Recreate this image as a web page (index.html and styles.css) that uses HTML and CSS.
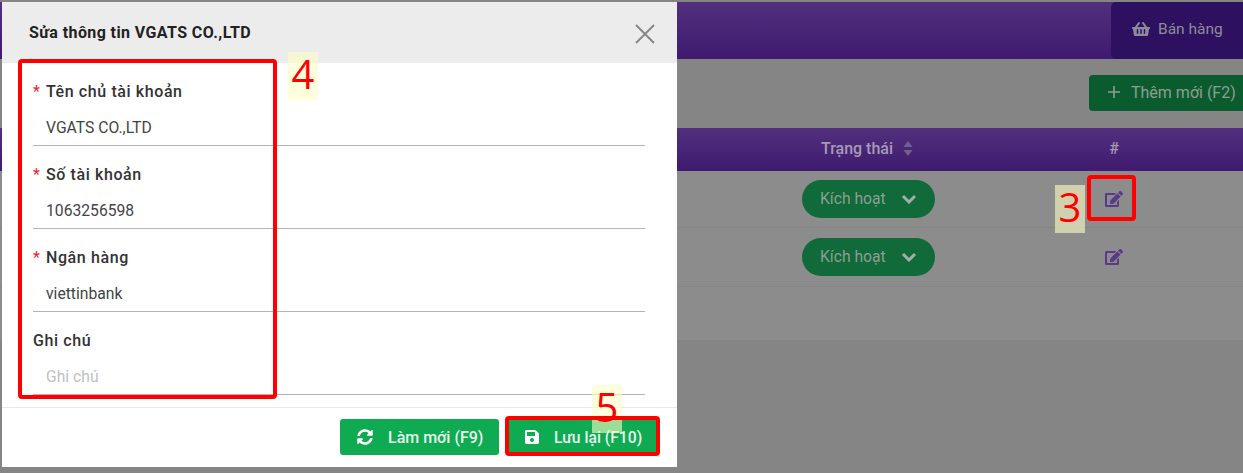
FILE: index.html
```html
<!DOCTYPE html>
<html lang="en">
<head>
    <meta charset="UTF-8">
    <title>Sửa thông tin</title>
    <link rel="stylesheet" href="styles.css">
</head>
<body>
    <!-- Icons -->
    <svg class="icon-defs" xmlns="http://www.w3.org/2000/svg">
        <symbol id="i-edit" viewBox="0 0 576 512"><path d="M402.6 83.2l90.2 90.2c3.8 3.8 3.8 10 0 13.8L274.4 405.6l-92.8 10.3c-12.4 1.4-22.9-9.1-21.5-21.5l10.3-92.8L388.8 83.2c3.8-3.8 10-3.8 13.8 0zm162-22.9l-48.8-48.8c-15.2-15.2-39.9-15.2-55.2 0l-35.4 35.4c-3.8 3.8-3.8 10 0 13.8l90.2 90.2c3.8 3.8 10 3.8 13.8 0l35.4-35.4c15.2-15.3 15.2-40 0-55.2zM384 346.2V448H64V128h229.8c3.2 0 6.2-1.3 8.5-3.5l40-40c7.6-7.6 2.2-20.5-8.5-20.5H48C21.5 64 0 85.5 0 112v352c0 26.5 21.5 48 48 48h352c26.5 0 48-21.5 48-48V306.2c0-10.7-12.9-16-20.5-8.5l-40 40c-2.2 2.3-3.5 5.3-3.5 8.5z"/></symbol>
        <symbol id="i-save" viewBox="0 0 448 512"><path d="M433.941 129.941l-83.882-83.882A48 48 0 0 0 316.118 32H48C21.49 32 0 53.49 0 80v352c0 26.51 21.49 48 48 48h352c26.51 0 48-21.49 48-48V163.882a48 48 0 0 0-14.059-33.941zM224 416c-35.346 0-64-28.654-64-64 0-35.346 28.654-64 64-64s64 28.654 64 64c0 35.346-28.654 64-64 64zm96-304.52V212c0 6.627-5.373 12-12 12H76c-6.627 0-12-5.373-12-12V108c0-6.627 5.373-12 12-12h228.52c3.183 0 6.235 1.264 8.485 3.515l3.48 3.48A11.996 11.996 0 0 1 320 111.48z"/></symbol>
        <symbol id="i-sync" viewBox="0 0 512 512"><path d="M370.72 133.28C339.458 104.008 298.888 87.962 255.848 88c-77.458.068-144.328 53.178-162.791 126.85-1.344 5.363-6.122 9.15-11.651 9.15H24.103c-7.498 0-13.194-6.807-11.807-14.176C33.933 94.924 134.813 8 256 8c66.448 0 126.791 26.136 171.315 68.685L463.03 40.97C478.149 25.851 504 36.559 504 57.941V192c0 13.255-10.745 24-24 24H345.941c-21.382 0-32.09-25.851-16.971-40.971l41.75-41.749zM32 296h134.059c21.382 0 32.09 25.851 16.971 40.971l-41.75 41.75c31.262 29.273 71.835 45.319 114.876 45.28 77.418-.07 144.315-53.144 162.787-126.849 1.344-5.363 6.122-9.15 11.651-9.15h57.304c7.498 0 13.194 6.807 11.807 14.176C478.067 417.076 377.187 504 256 504c-66.448 0-126.791-26.136-171.315-68.685L48.97 471.03C33.851 486.149 8 475.441 8 454.059V320c0-13.255 10.745-24 24-24z"/></symbol>
        <symbol id="i-basket" viewBox="0 0 576 512"><path d="M576 216v16c0 13.255-10.745 24-24 24h-8l-26.113 182.788C514.509 462.435 494.257 480 470.37 480H105.63c-23.887 0-44.139-17.565-47.518-41.212L32 256h-8c-13.255 0-24-10.745-24-24v-16c0-13.255 10.745-24 24-24h67.341l106.78-146.821c10.395-14.292 30.407-17.453 44.701-7.058 14.293 10.395 17.453 30.408 7.058 44.701L170.477 192h235.046L326.12 82.821c-10.395-14.292-7.234-34.306 7.059-44.701 14.291-10.395 34.306-7.235 44.701 7.058L484.659 192H552c13.255 0 24 10.745 24 24zM312 392V280c0-13.255-10.745-24-24-24s-24 10.745-24 24v112c0 13.255 10.745 24 24 24s24-10.745 24-24zm112 0V280c0-13.255-10.745-24-24-24s-24 10.745-24 24v112c0 13.255 10.745 24 24 24s24-10.745 24-24zm-224 0V280c0-13.255-10.745-24-24-24s-24 10.745-24 24v112c0 13.255 10.745 24 24 24s24-10.745 24-24z"/></symbol>
        <symbol id="i-chevron" viewBox="0 0 16 10"><path d="M2 2l6 6 6-6" fill="none" stroke="currentColor" stroke-width="3"/></symbol>
    </svg>

    <!-- Page behind the dialog -->
    <div class="page">
        <header class="topbar">
            <a class="sale-tab">
                <svg class="sale-icon"><use href="#i-basket"/></svg>
                Bán hàng
            </a>
        </header>

        <div class="toolbar">
            <button class="add-btn">
                <svg class="plus-icon" viewBox="0 0 12 12"><path d="M6 0v12M0 6h12" stroke="currentColor" stroke-width="1.6"/></svg>
                Thêm mới (F2)
            </button>
        </div>

        <div class="table">
            <div class="table-row table-head">
                <div></div>
                <div class="cell status-head">
                    Trạng thái
                    <svg class="sort-icon" viewBox="0 0 10 15"><path d="M5 0l4.5 6H.5zM5 15L.5 9h9z"/></svg>
                </div>
                <div class="cell">#</div>
            </div>
            <div class="table-row row-first">
                <div></div>
                <div class="cell"><span class="status">Kích hoạt <svg class="chevron"><use href="#i-chevron"/></svg></span></div>
                <div class="cell"><svg class="edit-icon"><use href="#i-edit"/></svg></div>
            </div>
            <div class="table-row row-second">
                <div></div>
                <div class="cell"><span class="status">Kích hoạt <svg class="chevron"><use href="#i-chevron"/></svg></span></div>
                <div class="cell"><svg class="edit-icon"><use href="#i-edit"/></svg></div>
            </div>
            <div class="table-foot"></div>
        </div>
    </div>

    <!-- Dialog -->
    <div class="modal">
        <div class="modal-header">
            <h1 class="modal-title">Sửa thông tin VGATS CO.,LTD</h1>
            <svg class="close-icon" viewBox="0 0 20 20"><path d="M1 1l18 18M19 1L1 19" fill="none" stroke="currentColor" stroke-width="1.8"/></svg>
        </div>
        <div class="modal-body">
            <div class="field">
                <label class="field-label"><span class="required">*</span>Tên chủ tài khoản</label>
                <div class="field-input">VGATS CO.,LTD</div>
            </div>
            <div class="field">
                <label class="field-label"><span class="required">*</span>Số tài khoản</label>
                <div class="field-input">1063256598</div>
            </div>
            <div class="field">
                <label class="field-label"><span class="required">*</span>Ngân hàng</label>
                <div class="field-input">viettinbank</div>
            </div>
            <div class="field">
                <label class="field-label">Ghi chú</label>
                <div class="field-input placeholder">Ghi chú</div>
            </div>
        </div>
        <div class="modal-footer">
            <button class="btn btn-reset"><svg class="btn-icon"><use href="#i-sync"/></svg>Làm mới (F9)</button>
            <button class="btn btn-save"><svg class="btn-icon"><use href="#i-save"/></svg>Lưu lại (F10)</button>
        </div>
    </div>

    <!-- Screenshot annotations -->
    <div class="step-label step-3">3</div>
    <div class="step-label step-4">4</div>
    <div class="step-label step-5">5</div>
    <div class="mark mark-3"></div>
    <div class="mark mark-4"></div>
    <div class="mark mark-5"></div>
</body>
</html>
```

FILE: styles.css
```css
/* Basic Styling */
* {
    box-sizing: border-box;
}

html,
body {
    height: 100%;
}

body {
    margin: 0;
    background: #858585;
    font-family: Roboto, "Liberation Sans", sans-serif;
    overflow: hidden;
    position: relative;
}

.icon-defs {
    display: none;
}

/* Page behind the dialog */
.page {
    padding-top: 2px;
    color: #8f8f8f;
}

.topbar {
    height: 57px;
    display: flex;
    justify-content: flex-end;
    background: linear-gradient(to bottom, #52307c, #3f1a70);
}

.sale-tab {
    width: 132px;
    display: flex;
    align-items: center;
    padding: 0 0 4px 21px;
    gap: 8px;
    background: #2d1160;
    border-radius: 5px 0 0 5px;
    font-size: 15.5px;
    color: #8f8a99;
}

.sale-icon {
    width: 18px;
    height: 16px;
    fill: currentColor;
}

.toolbar {
    height: 69px;
    padding-top: 16px;
    display: flex;
    justify-content: flex-end;
}

.add-btn {
    height: 36px;
    width: 154px;
    display: flex;
    align-items: center;
    padding: 0 0 2px 19px;
    gap: 11px;
    border: none;
    border-radius: 4px 0 0 4px;
    background: #0a5c2f;
    color: #8f9d93;
    font-family: inherit;
    font-size: 16px;
}

.plus-icon {
    width: 12px;
    height: 12px;
}

.table-row {
    display: grid;
    grid-template-columns: 738px 261px 230px;
    padding-right: 14px;
}

.cell {
    display: flex;
    justify-content: center;
    align-items: center;
}

.table-head {
    height: 43px;
    padding-bottom: 2px;
    background: linear-gradient(to bottom, #52307c, #3f1a70);
    color: #a49bb3;
    font-size: 16px;
    font-weight: 500;
}

.status-head {
    padding-right: 3px;
}

.sort-icon {
    width: 10px;
    height: 15px;
    margin-left: 10px;
    fill: #72608c;
}

.row-first {
    height: 57px;
    background: #8c8c8c;
    border-bottom: 1px solid #858585;
}

.row-second {
    height: 59px;
    background: #8c8c8c;
    border-bottom: 1px solid #858585;
}

.table-foot {
    height: 53px;
    background: #8c8c8c;
}

.status {
    width: 133px;
    height: 38px;
    display: flex;
    align-items: center;
    justify-content: space-between;
    padding: 0 18px 1px;
    border-radius: 19px;
    background: #106a39;
    color: #8f9d93;
    font-size: 15.7px;
}

.chevron {
    width: 16px;
    height: 10px;
    color: #a2aea6;
}

.edit-icon {
    width: 18px;
    height: 16px;
    fill: #5a3a88;
}

/* Dialog */
.modal {
    position: absolute;
    top: 2px;
    left: 2px;
    width: 675px;
    height: 465px;
    display: flex;
    flex-direction: column;
    background: #fff;
}

.modal-header {
    flex: none;
    height: 61px;
    display: flex;
    align-items: center;
    justify-content: space-between;
    padding: 0 22px 0 27px;
    background: #ececec;
}

.modal-title {
    margin: 0;
    font-size: 16px;
    font-weight: 700;
    letter-spacing: 0.4px;
    color: #222;
}

.close-icon {
    width: 20px;
    height: 20px;
    margin-top: 2px;
    color: #848484;
}

.modal-body {
    flex: 1;
    min-height: 0;
    padding: 18px 32px 0 31px;
}

.field {
    height: 83px;
}

.field-label {
    display: block;
    height: 22px;
    margin-bottom: 7px;
    line-height: 22px;
    font-size: 16px;
    font-weight: 500;
    letter-spacing: 0.6px;
    color: #333;
}

.required {
    display: inline-block;
    width: 13px;
    color: #f5222d;
    font-weight: 400;
}

.field-input {
    height: 36px;
    padding: 0 0 1px 13px;
    display: flex;
    align-items: center;
    border-bottom: 1px solid #b3b3b3;
    font-size: 15.7px;
    color: #444;
}

.placeholder {
    color: #bfbfbf;
}

.modal-footer {
    flex: none;
    height: 60px;
    display: flex;
    justify-content: flex-end;
    gap: 7px;
    padding: 11px 18px 0 0;
    border-top: 1px solid #e8e8e8;
}

.btn {
    height: 36px;
    display: flex;
    align-items: center;
    border: none;
    border-radius: 3px;
    background: #0eab52;
    color: #e8f6ee;
    font-family: inherit;
    font-size: 16px;
    font-weight: 500;
}

.btn-reset {
    width: 159px;
    padding-left: 17px;
    gap: 15px;
}

.btn-save {
    width: 153px;
    padding-left: 18px;
    gap: 14px;
    font-size: 15.7px;
}

.btn-icon {
    width: 16px;
    height: 16px;
    fill: #fff;
}

/* Screenshot annotations */
.step-label {
    position: absolute;
    width: 30px;
    height: 48px;
    display: flex;
    align-items: center;
    justify-content: center;
    padding-bottom: 6px;
    background: rgba(255, 255, 200, 0.6);
    color: #f00;
    font-family: "Open Sans", sans-serif;
    font-size: 40px;
}

.step-3 {
    left: 1055px;
    top: 185px;
}

.step-4 {
    left: 288px;
    top: 52px;
}

.step-5 {
    left: 592px;
    top: 385px;
}

.mark {
    position: absolute;
    border: 4px solid #f00;
    border-radius: 4px;
}

.mark-3 {
    left: 1087px;
    top: 175px;
    width: 49px;
    height: 46px;
}

.mark-4 {
    left: 18px;
    top: 59px;
    width: 259px;
    height: 340px;
}

.mark-5 {
    left: 505px;
    top: 416px;
    width: 155px;
    height: 40px;
}
```
